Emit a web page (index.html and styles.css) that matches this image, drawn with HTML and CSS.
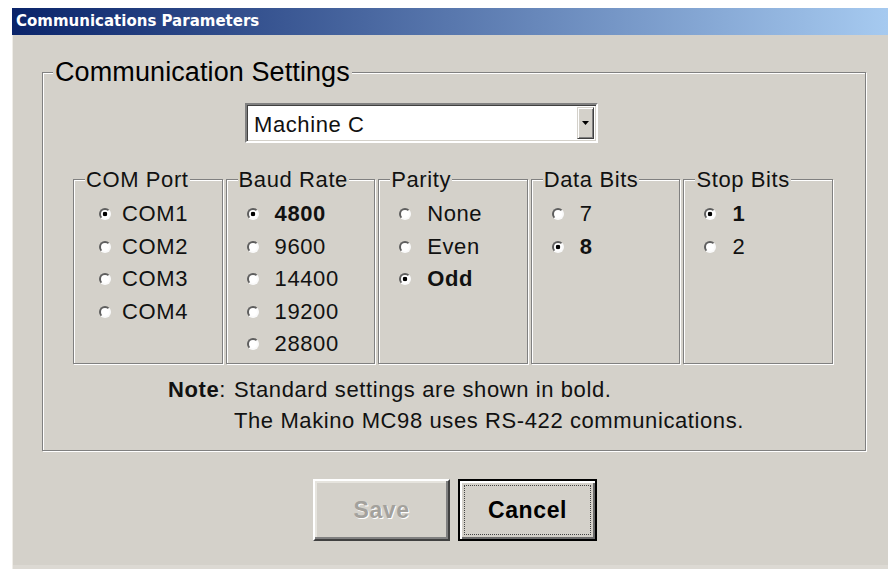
FILE: index.html
```html
<!DOCTYPE html>
<html lang="en">
<head>
<meta charset="utf-8">
<title>Communications Parameters</title>
<link rel="stylesheet" href="styles.css">
</head>
<body>
<div class="window">
  <div class="titlebar">Communications Parameters</div>
  <div class="content">
    <section class="group group-main">
      <div class="group-title group-title-lg">Communication Settings</div>

      <div class="combo">
        <span class="combo-value">Machine C</span>
        <span class="combo-btn">
          <svg width="7" height="4" viewBox="0 0 7 4"><path d="M0 0h7L3.5 4z" fill="#000"/></svg>
        </span>
      </div>

      <div class="options">
        <section class="group group-opt">
          <div class="group-title">COM Port</div>
          <ul class="radio-list radio-list-com">
            <li class="radio-item"><span class="radio checked"></span><span>COM1</span></li>
            <li class="radio-item"><span class="radio"></span><span>COM2</span></li>
            <li class="radio-item"><span class="radio"></span><span>COM3</span></li>
            <li class="radio-item"><span class="radio"></span><span>COM4</span></li>
          </ul>
        </section>
        <section class="group group-opt">
          <div class="group-title">Baud Rate</div>
          <ul class="radio-list">
            <li class="radio-item"><span class="radio checked"></span><b>4800</b></li>
            <li class="radio-item"><span class="radio"></span><span>9600</span></li>
            <li class="radio-item"><span class="radio"></span><span>14400</span></li>
            <li class="radio-item"><span class="radio"></span><span>19200</span></li>
            <li class="radio-item"><span class="radio"></span><span>28800</span></li>
          </ul>
        </section>
        <section class="group group-opt">
          <div class="group-title">Parity</div>
          <ul class="radio-list">
            <li class="radio-item"><span class="radio"></span><span>None</span></li>
            <li class="radio-item"><span class="radio"></span><span>Even</span></li>
            <li class="radio-item"><span class="radio checked"></span><b>Odd</b></li>
          </ul>
        </section>
        <section class="group group-opt">
          <div class="group-title">Data Bits</div>
          <ul class="radio-list">
            <li class="radio-item"><span class="radio"></span><span>7</span></li>
            <li class="radio-item"><span class="radio checked"></span><b>8</b></li>
          </ul>
        </section>
        <section class="group group-opt">
          <div class="group-title">Stop Bits</div>
          <ul class="radio-list">
            <li class="radio-item"><span class="radio checked"></span><b>1</b></li>
            <li class="radio-item"><span class="radio"></span><span>2</span></li>
          </ul>
        </section>
      </div>

      <div class="note">
        <span class="note-label"><b>Note</b>:</span>
        <div class="note-text">
          <div>Standard settings are shown in bold.</div>
          <div>The Makino MC98 uses RS-422 communications.</div>
        </div>
      </div>
    </section>

    <div class="buttons">
      <button class="btn" type="button" disabled>Save</button>
      <button class="btn btn-default" type="button"><span class="focus">Cancel</span></button>
    </div>
  </div>
</div>
</body>
</html>
```

FILE: styles.css
```css
* { box-sizing: border-box; }

body {
  margin: 0;
  background: #fff;
  font-family: "Liberation Sans", Arial, sans-serif;
  color: #000;
}

.window {
  margin: 8px 0 0 12px;
  width: 876px;
  height: 561px;
  background: #d4d1ca;
  box-shadow: inset 1px 0 #efede8, inset 0 -4px #dcd9d3;
}

.titlebar {
  height: 27px;
  padding: 0 0 0 4px;
  background: linear-gradient(90deg, #0a246a 0%, #a6caf0 100%);
  color: #fff;
  font: bold 15px "DejaVu Sans", sans-serif;
  line-height: 27px;
  letter-spacing: 0;
}

.content {
  padding: 37px 22px 0 30px;
  font-size: 22px;
  letter-spacing: 0.6px;
  color: #111;
}

/* etched group frame */
.group {
  border: 1px solid #808080;
  box-shadow: inset 1px 1px #fff, 1px 1px #fff;
}

.group-title {
  width: fit-content;
  margin: -13px 0 0 11px;
  padding: 0 1px;
  line-height: 26px;
  background: #d4d1ca;
  white-space: nowrap;
}

.group-title-lg {
  margin: -16px 0 0 10px;
  padding: 0 2px;
  font-size: 27px;
  line-height: 31px;
  letter-spacing: 0.1px;
  color: #000;
}

/* machine drop-down */
.combo {
  display: flex;
  align-items: center;
  margin: 15px 0 0 202px;
  width: 353px;
  height: 40px;
  background: #fff;
  border: 2px solid;
  border-color: #808080 #fff #fff #808080;
  box-shadow: inset 1px 1px #404040, inset -1px -1px #d4d1ca;
}

.combo-value {
  flex: 1;
  padding: 3px 0 0 7px;
}

.combo-btn {
  align-self: stretch;
  width: 17px;
  margin: 2px 2px 2px 0;
  display: flex;
  align-items: center;
  justify-content: center;
  background: #d4d1ca;
  border: 1px solid;
  border-color: #d4d1ca #404040 #404040 #d4d1ca;
  box-shadow: inset 1px 1px #fff, inset -1px -1px #808080;
}

/* option groups */
.options {
  display: grid;
  grid-template-columns: repeat(5, 1fr);
  gap: 3px;
  margin: 36px 32px 0 30px;
}

.group-opt {
  height: 185px;
}

.radio-list {
  list-style: none;
  margin: 0;
  padding: 5px 0 0 20px;
}

.radio-list-com {
  padding-left: 25px;
}

.radio-item {
  display: flex;
  align-items: center;
  gap: 16px;
  height: 32.5px;
}

.radio-list-com .radio-item {
  gap: 11px;
}

.radio {
  flex: none;
  width: 12px;
  height: 12px;
  border-radius: 50%;
  border: 2px solid;
  border-color: #5e5e5e #fafafa #fafafa #5e5e5e;
  background: #fff;
}

.radio.checked {
  background: radial-gradient(circle, #000 0 2px, #fff 2.6px);
}

/* note under the groups */
.note {
  display: flex;
  margin: 10px 0 14px 125px;
  line-height: 31px;
}

.note-label {
  width: 66px;
  flex: none;
}

/* dialog buttons */
.buttons {
  display: flex;
  gap: 8px;
  margin: 28px 0 0 271px;
}

.btn {
  display: flex;
  align-items: center;
  justify-content: center;
  height: 62px;
  width: 137px;
  padding: 0;
  font: bold 23px "Liberation Sans", Arial, sans-serif;
  letter-spacing: 0.6px;
  color: #000;
  background: #d4d1ca;
  border: 2px solid;
  border-color: #fff #404040 #404040 #fff;
  box-shadow: inset -2px -2px #808080, inset 2px 2px #e6e4de;
  appearance: none;
}

.btn:disabled {
  color: #a3a19c;
  text-shadow: 1px 1px #fff;
}

.btn-default {
  width: 139px;
  border: 2px solid #000;
  box-shadow: inset 2px 2px #fff, inset -2px -2px #6a6a6a;
  align-items: stretch;
}

.btn-default .focus {
  flex: 1;
  display: flex;
  align-items: center;
  justify-content: center;
  margin: 4px;
  border: 1px dotted #444;
}
```
